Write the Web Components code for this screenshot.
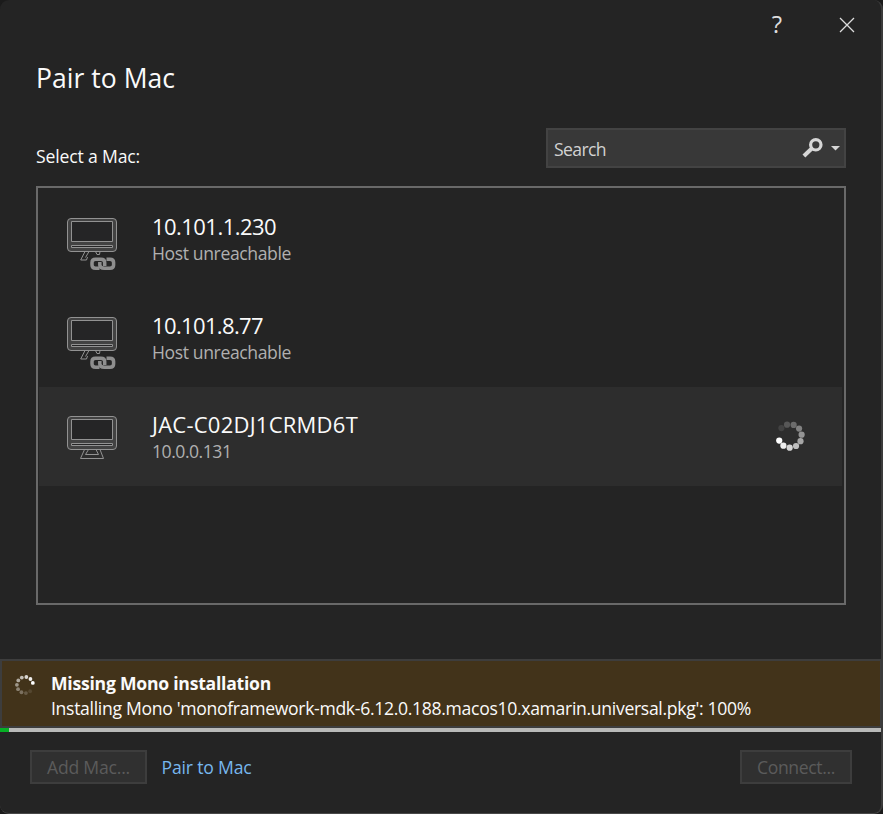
<!DOCTYPE html>
<html lang="en"><head><meta charset="utf-8"><title>Pair to Mac</title>
<style>
html,body{margin:0;height:100%;background:#1b1b1b;overflow:hidden}
body{font-family:"Open Sans","Noto Sans",sans-serif;color:#fafafa}
</style></head><body>
<pair-dialog></pair-dialog>
<script>
const define=(name,html,init)=>customElements.define(name,class extends HTMLElement{
  connectedCallback(){
    if(this.shadowRoot)return;
    this.attachShadow({mode:'open'}).innerHTML=typeof html==='function'?html(this):html;
    if(init)init(this);
  }
});

/* One line of text, spaced so that it takes the given width. */
define('fit-text','<style>:host{display:block;white-space:nowrap;line-height:24px;font-size:17.5px}span{display:inline-block}</style><span><slot></slot></span>',el=>{
  const s=el.shadowRoot.querySelector('span');
  el.style.fontSize=el.getAttribute('size')+'px';
  const w=s.getBoundingClientRect().width;
  s.style.letterSpacing=(el.getAttribute('width')-w)/el.textContent.length+'px';
});

/* Ring of dots that fade from the leading one. */
define('busy-ring',el=>{
  const size=+el.getAttribute('size'),r=+el.getAttribute('radius'),d=+el.getAttribute('dot'),start=+el.getAttribute('start');
  let dots='';
  for(let i=0;i<10;i++){
    const a=(start-i*32.7)*Math.PI/180;
    dots+=`<circle cx="${size/2+r*Math.cos(a)}" cy="${size/2+r*Math.sin(a)}" r="${d}" opacity="${[1,.92,.8,.69,.58,.49,.4,.3,.2,.1][i]}"/>`;
  }
  return `<style>:host{display:block;width:${size}px;height:${size}px}svg{display:block}</style><svg width="${size}" height="${size}" fill="#fff">${dots}</svg>`;
});

define('mac-icon',el=>{
  const off=el.hasAttribute('offline');
  const foot=off
   ?'<path d="M18 33.5 13.7 42H19.5L20.5 39M22 33.5 18.5 39.5M28.5 33.5 30 36.5H32.5L33 33.5"/>'
   :'<path d="M17.5 33.5 13.5 42.5H36.5L33 33.5M21.5 33.5 18.5 38.5H31.5L29 33.5"/>';
  const link=off?'<g fill="none" stroke="#8e8e8e" stroke-width="3.5"><path d="M32.5 50.2H28.5Q25 50.2 25 47V44.5Q25 41.2 28.5 41.2H34Q37.7 41.2 37.7 44.5V48"/><path d="M39.5 41.2H43Q46.6 41.2 46.6 44.5V47Q46.6 50.2 43 50.2H37.5Q32.8 50.2 32.8 47V44"/></g>':'';
  return `<style>:host{display:block;width:50px;height:54px}svg{display:block;overflow:visible}</style>
  <svg width="50" height="54" fill="none" stroke="#929292" stroke-width="1">
  <path d="M4 .5H46Q49.5.5 49.5 4V30Q49.5 33.5 46 33.5H4Q.5 33.5.5 30V4Q.5.5 4 .5Z" fill="#424242"/>
  <path d="M4.5 3.5H45.5V23.5H4.5ZM4.5 27.5H45.5V29.5H4.5Z" fill="#252526"/>${foot}${link}</svg>`;
});

define('mac-row',`<style>
:host{display:grid;grid-template-columns:50px 1fr auto;column-gap:35px;height:99px;padding:0 37px 0 28px;box-sizing:border-box;align-items:start}
:host([selected]){background:#2d2d2d}
mac-icon{margin-top:29px}.t{display:grid;padding-top:25px}
::slotted([slot=detail]){color:#b0b0b0;margin-top:3px}
::slotted([slot=status]){margin-top:34px}
</style><div id="icon"></div><div class="t"><slot name="name"></slot><slot name="detail"></slot></div><slot name="status"></slot>`,el=>{
  const i=document.createElement('mac-icon');
  if(el.hasAttribute('offline'))i.setAttribute('offline','');
  el.shadowRoot.querySelector('#icon').replaceWith(i);
});

define('mac-list',`<style>:host{display:flex;flex-direction:column;box-sizing:border-box;height:419px;border:2px solid #696969;padding:1px 2px 0 1px}</style><slot></slot>`);

define('search-box',`<style>
:host{display:flex;align-items:center;box-sizing:border-box;width:300px;height:40px;border:2px solid #434343;background:#383838;padding:0 4px 0 6px;color:#d2d2d2}
fit-text{flex:1;padding-top:1px}svg{display:block}
</style><fit-text size="17.6" width="52">Search</fit-text>
<svg width="39" height="22" viewBox="0 0 39 22"><circle cx="14.8" cy="7.8" r="5.2" fill="none" stroke="#d6d6d6" stroke-width="3.2"/><path d="M10.8 11.5 2.9 19" stroke="#d6d6d6" stroke-width="4"/><path d="M30 9H39L34.5 13.5Z" fill="#d6d6d6"/></svg>`);

define('title-bar',`<style>:host{display:flex;justify-content:flex-end;align-items:center;height:50px;padding-right:28px;gap:55px}
svg{display:block}svg:last-child{margin-right:0}.q{font:400 24px/34px "Open Sans",sans-serif;color:#ddd;width:14px;text-align:center;margin-top:-3px}:host{padding-right:26px;gap:55px}</style>
<span class="q">?</span><svg width="16" height="16" stroke="#ddd" stroke-width="1.3"><path d="M1 1 15 15M15 1 1 15"/></svg>`);

define('status-banner',`<style>:host{display:flex;box-sizing:border-box;height:69px;border:2px solid #3d3d3d;border-right-width:1px;background:#42331a;padding:10px 0 0 12px}
.t{margin-left:15px}::slotted([slot=text]){margin-top:1px}busy-ring{margin-top:3px}</style>
<busy-ring size="22" radius="8.1" dot="1.9" start="-15"></busy-ring><div class="t"><slot name="title"></slot><slot name="text"></slot></div>`);

define('progress-line',`<style>:host{display:block;height:4px;background:#b9bab9}div{height:4px;width:9px;background:#06b025}</style><div></div>`);

define('flat-button',`<style>:host{display:flex;justify-content:center;box-sizing:border-box;height:34px;border:2px solid #3d3d3d;background:#303030;color:#5b5b5b;padding-top:3px}</style><slot></slot>`);

define('pair-dialog',`<style>
:host{display:flex;flex-direction:column;box-sizing:border-box;width:883px;height:814px;background:#242424;border-right:2px solid #3b3b3b;border-bottom:1px solid #484848;border-radius:9px;overflow:hidden}
header{padding:9px 0 0 36px;height:78px;box-sizing:border-box}
.tools{display:flex;justify-content:space-between;padding:0 35px 0 36px;height:58px}
.tools>fit-text{margin-top:16px}
mac-list{margin:0 35px 0 36px}
status-banner{margin-top:54px}
footer{display:flex;padding:18px 29px 0 30px}
.add{width:117px}.connect{width:112px;margin-left:auto}
.link{color:#77b7ee;margin:5px 0 0 14.5px}
</style>
<title-bar></title-bar>
<header><fit-text size="26.5" width="139" style="line-height:38px">Pair to Mac</fit-text></header>
<div class="tools"><fit-text size="17.6" width="104">Select a Mac:</fit-text><search-box></search-box></div>
<mac-list>
<mac-row offline><fit-text slot="name" size="22" width="124">10.101.1.230</fit-text><fit-text slot="detail" size="17.6" width="139">Host unreachable</fit-text></mac-row>
<mac-row offline><fit-text slot="name" size="22" width="111">10.101.8.77</fit-text><fit-text slot="detail" size="17.6" width="139">Host unreachable</fit-text></mac-row>
<mac-row selected><fit-text slot="name" size="22" width="206">JAC-C02DJ1CRMD6T</fit-text><fit-text slot="detail" size="17.6" width="79.5">10.0.0.131</fit-text><busy-ring slot="status" size="30" radius="11.7" dot="3.1" start="157"></busy-ring></mac-row>
</mac-list>
<status-banner><fit-text slot="title" size="17.6" width="220" style="font-weight:700">Missing Mono installation</fit-text><fit-text slot="text" size="17.6" width="700">Installing Mono 'monoframework-mdk-6.12.0.188.macos10.xamarin.universal.pkg': 100%</fit-text></status-banner>
<progress-line></progress-line>
<footer><flat-button class="add"><fit-text size="17.6" width="83">Add Mac...</fit-text></flat-button><fit-text class="link" size="17.6" width="90">Pair to Mac</fit-text><flat-button class="connect"><fit-text size="17.6" width="78">Connect...</fit-text></flat-button></footer>`);
</script></body></html>
